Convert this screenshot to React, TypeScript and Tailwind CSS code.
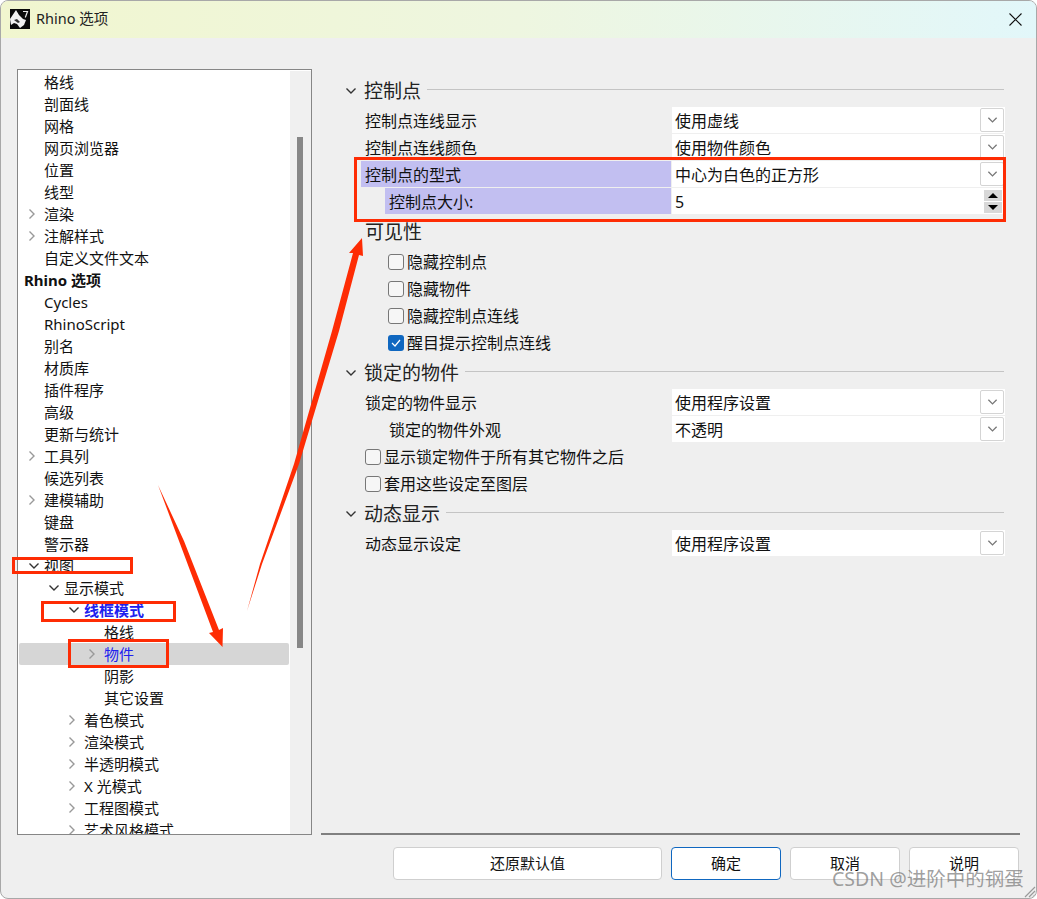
const FONT = "font-['Noto_Sans','Noto_Sans_CJK_SC',sans-serif]";

type TreeItem = {
  text: string;
  indent: number;
  arrow?: "right" | "down";
  bold?: boolean;
  blue?: boolean;
  selected?: boolean;
};

const TREE_ITEMS: TreeItem[] = [
  { text: "格线", indent: 1 },
  { text: "剖面线", indent: 1 },
  { text: "网格", indent: 1 },
  { text: "网页浏览器", indent: 1 },
  { text: "位置", indent: 1 },
  { text: "线型", indent: 1 },
  { text: "渲染", indent: 1, arrow: "right" },
  { text: "注解样式", indent: 1, arrow: "right" },
  { text: "自定义文件文本", indent: 1 },
  { text: "Rhino 选项", indent: 0, bold: true },
  { text: "Cycles", indent: 1 },
  { text: "RhinoScript", indent: 1 },
  { text: "别名", indent: 1 },
  { text: "材质库", indent: 1 },
  { text: "插件程序", indent: 1 },
  { text: "高级", indent: 1 },
  { text: "更新与统计", indent: 1 },
  { text: "工具列", indent: 1, arrow: "right" },
  { text: "候选列表", indent: 1 },
  { text: "建模辅助", indent: 1, arrow: "right" },
  { text: "键盘", indent: 1 },
  { text: "警示器", indent: 1 },
  { text: "视图", indent: 1, arrow: "down" },
  { text: "显示模式", indent: 2, arrow: "down" },
  { text: "线框模式", indent: 3, arrow: "down", bold: true, blue: true },
  { text: "格线", indent: 4 },
  { text: "物件", indent: 4, arrow: "right", blue: true, selected: true },
  { text: "阴影", indent: 4 },
  { text: "其它设置", indent: 4 },
  { text: "着色模式", indent: 3, arrow: "right" },
  { text: "渲染模式", indent: 3, arrow: "right" },
  { text: "半透明模式", indent: 3, arrow: "right" },
  { text: "X 光模式", indent: 3, arrow: "right" },
  { text: "工程图模式", indent: 3, arrow: "right" },
  { text: "艺术风格模式", indent: 3, arrow: "right" },
];

function ChevronRight() {
  return (
    <svg width="8" height="12" viewBox="0 0 8 12" fill="none" stroke="#999" strokeWidth="1.4">
      <path d="M1.5 1.5 6 6l-4.5 4.5" />
    </svg>
  );
}

function ChevronDown({ color = "#333", width = 12 }: { color?: string; width?: number }) {
  return (
    <svg width={width} height="8" viewBox="0 0 12 8" fill="none" stroke={color} strokeWidth="1.4">
      <path d="M1.5 1.5 6 6l4.5-4.5" />
    </svg>
  );
}

function TreeRow({ item }: { item: TreeItem }) {
  const left = [5, 25, 45, 65, 85][item.indent];
  return (
    <div
      className={`flex h-[22px] shrink-0 items-center rounded-[2px] text-[15px] leading-[22px] ${
        item.selected ? "bg-[#d6d6d6]" : ""
      } ${item.bold ? "font-bold" : ""} ${item.blue ? "text-[#2020ee]" : "text-[#111]"}`}
      style={{ paddingLeft: left }}
    >
      {item.arrow && (
        <span className="-ml-[17px] flex w-[17px] justify-start pl-[1px]">
          {item.arrow === "right" ? <ChevronRight /> : <ChevronDown />}
        </span>
      )}
      <span className="whitespace-nowrap">{item.text}</span>
    </div>
  );
}

function Tree() {
  return (
    <div className="flex h-[766px] w-[295px] shrink-0 overflow-hidden border border-[#868686] bg-white">
      <div className="flex w-[272px] flex-col overflow-hidden pl-[1px] pr-[1px] pt-[1px]">
        {TREE_ITEMS.map((item, i) => (
          <TreeRow key={i} item={item} />
        ))}
      </div>
      <div className="mt-[1px] w-[21px] bg-[#f0f0f0] pl-[7px] pt-[66px]">
        <div className="h-[511px] w-[6px] bg-[#878787]" />
      </div>
    </div>
  );
}

function SectionHeader({ title }: { title: string }) {
  return (
    <div className="flex h-[26px] items-center pl-[24px]">
      <span className="flex w-[19px] shrink-0">
        <ChevronDown />
      </span>
      <span className="text-[19px] leading-[26px] text-[#222]">{title}</span>
      <div className="ml-[6px] mr-[16px] h-[1px] flex-1 -translate-y-[2px] bg-[#c4c4c4]" />
    </div>
  );
}

function DropButton() {
  return (
    <div className="ml-auto mr-[1px] flex h-[24px] w-[24px] items-center justify-center rounded-[2px] border border-[#d4d4d4] bg-white">
      <ChevronDown color="#777" width={11} />
    </div>
  );
}

function Spinner() {
  return (
    <div className="ml-auto mr-[3px] flex w-[18px] flex-col gap-[1px]">
      <div className="flex h-[11px] items-center justify-center bg-[#d8d8d8]">
        <div className="h-0 w-0 border-x-[5px] border-b-[5px] border-x-transparent border-b-black" />
      </div>
      <div className="flex h-[11px] items-center justify-center bg-[#d8d8d8]">
        <div className="h-0 w-0 border-x-[5px] border-t-[5px] border-x-transparent border-t-black" />
      </div>
    </div>
  );
}

function FieldRow({
  label,
  value,
  indented,
  highlight,
  spin,
  className = "",
}: {
  label: string;
  value: string;
  indented?: boolean;
  highlight?: boolean;
  spin?: boolean;
  className?: string;
}) {
  return (
    <div className={`flex h-[26px] pl-[40px] text-[16px] leading-[26px] text-[#111] ${className}`}>
      <div className="flex w-[310px] shrink-0">
        <div className={`flex-1 pl-[4px] ${indented ? "ml-[24px]" : ""} ${highlight ? "bg-[#c2bff1]" : ""}`}>
          <span className="inline-block translate-y-[1px]">{label}</span>
        </div>
      </div>
      <div className="ml-[1px] flex w-[333px] items-center bg-white pl-[3px]">
        <span className="translate-y-[1px]">{value}</span>
        {spin ? <Spinner /> : <DropButton />}
      </div>
    </div>
  );
}

function CheckRow({ label, checked, left }: { label: string; checked?: boolean; left: "outer" | "inner" }) {
  return (
    <div
      className={`flex h-[27px] items-center text-[16px] text-[#111] ${left === "inner" ? "pl-[67px]" : "pl-[44px]"}`}
    >
      {checked ? (
        <div className="flex h-[16px] w-[16px] items-center justify-center rounded-[3px] bg-[#0f67c0]">
          <svg width="10" height="8" viewBox="0 0 10 8" fill="none" stroke="white" strokeWidth="1.2">
            <path d="M1 4l3 3 5-6" />
          </svg>
        </div>
      ) : (
        <div className="h-[16px] w-[16px] rounded-[3px] border border-[#777] bg-[#f6f6f6]" />
      )}
      <span className="ml-[3px] whitespace-nowrap">{label}</span>
    </div>
  );
}

function FooterButton({ label, width, primary }: { label: string; width: string; primary?: boolean }) {
  return (
    <button
      className={`h-[33px] rounded-[4px] border bg-white text-[15px] text-[#111] ${width} ${
        primary ? "border-[#0f67c0]" : "border-[#cfcfcf]"
      }`}
    >
      {label}
    </button>
  );
}

function RhinoLogo() {
  return (
    <svg width="20" height="20" viewBox="0 0 20 20" className="shrink-0">
      <rect width="20" height="20" fill="#0a0a0a" />
      <path d="M0 10 6 1l3 5 4 4 3 1-2 5-4 3-3-4-3-1-3 2z" fill="#f2f2f2" />
      <path d="M4 11l3-1 3 3-2 1z" fill="#333" />
      <path d="M13 2.5h4.5l-2.2 6" fill="none" stroke="#e8e8e8" strokeWidth="1.2" />
    </svg>
  );
}

function Annotations() {
  return (
    <>
      <div className="absolute left-[353px] top-[156px] h-[65px] w-[652px] border-[3px] border-[#fe2c04]" />
      <div className="absolute left-[11px] top-[556px] h-[17px] w-[121px] border-[3px] border-[#fe2c04]" />
      <div className="absolute left-[40px] top-[600px] h-[21px] w-[135px] border-[3px] border-[#fe2c04]" />
      <div className="absolute left-[67px] top-[638px] h-[29px] w-[101px] border-[3px] border-[#fe2c04]" />
      <svg className="pointer-events-none absolute left-0 top-0" width="1037" height="899" viewBox="0 0 1037 899">
        <polygon points="157,484 178,540 212,631 208,632 221.5,646 222,627 218,629 183,540" fill="#fe2c04" />
        <polygon
          points="246,610 259,563 293,463 331,330 352,252 348,252 361,237 362,255 358,254 338,330 298,463 261,563"
          fill="#fe2c04"
        />
      </svg>
    </>
  );
}

export default function App() {
  return (
    <div className={`relative flex h-[899px] w-[1037px] flex-col overflow-hidden rounded-[8px] border border-[#a8a8a8] bg-[#efefef] ${FONT}`}>
      <div className="-mx-[1px] -mt-[1px] flex h-[38px] shrink-0 items-center bg-gradient-to-r from-[#f1f6cf] via-[#eef6e0] to-[#e2f7fa] pl-[10px]">
        <RhinoLogo />
        <span className="ml-[6px] text-[14.5px] text-[#222]">Rhino 选项</span>
        <svg width="13" height="13" viewBox="0 0 13 13" className="ml-auto mr-[15px]" stroke="#111" strokeWidth="1.1">
          <path d="M.5.5l12 12M12.5.5l-12 12" />
        </svg>
      </div>
      <div className="flex flex-1 pl-[16px] pt-[31px]">
        <Tree />
        <div className="ml-[9px] flex w-[699px] flex-col">
          <div className="-mt-[31px] h-[797px] border-b-2 border-[#808080] pt-[40px]">
            <SectionHeader title="控制点" />
            <div className="mt-[3px] flex flex-col gap-[1px]">
              <FieldRow label="控制点连线显示" value="使用虚线" />
              <FieldRow label="控制点连线颜色" value="使用物件颜色" />
              <FieldRow label="控制点的型式" value="中心为白色的正方形" highlight />
              <FieldRow label="控制点大小:" value="5" indented highlight spin />
            </div>
            <div className="mt-[5px] h-[26px] pl-[44px] text-[19px] leading-[26px] text-[#222]">可见性</div>
            <div className="mt-[3px]">
              <CheckRow left="inner" label="隐藏控制点" />
              <CheckRow left="inner" label="隐藏物件" />
              <CheckRow left="inner" label="隐藏控制点连线" />
              <CheckRow left="inner" label="醒目提示控制点连线" checked />
            </div>
            <div className="mt-[4px]">
              <SectionHeader title="锁定的物件" />
            </div>
            <div className="mt-[3px]">
              <FieldRow label="锁定的物件显示" value="使用程序设置" />
              <FieldRow className="mt-[1px]" label="锁定的物件外观" value="不透明" indented />
            </div>
            <div className="mt-[1px]">
              <CheckRow left="outer" label="显示锁定物件于所有其它物件之后" />
              <CheckRow left="outer" label="套用这些设定至图层" />
            </div>
            <div className="mt-[4px]">
              <SectionHeader title="动态显示" />
            </div>
            <FieldRow className="mt-[3px]" label="动态显示设定" value="使用程序设置" />
          </div>
          <div className="mt-[12px] flex justify-end gap-[9px] pr-[1px]">
            <FooterButton label="还原默认值" width="w-[269px]" />
            <FooterButton label="确定" width="w-[110px]" primary />
            <FooterButton label="取消" width="w-[110px]" />
            <FooterButton label="说明" width="w-[110px]" />
          </div>
        </div>
      </div>
      <Annotations />
      <span className="absolute left-[831px] top-[863px] whitespace-nowrap text-[19.5px] text-[#777]/70">CSDN @进阶中的钢蛋</span>
      <svg className="absolute bottom-0 right-0" width="14" height="14" viewBox="0 0 14 14" stroke="#9a9a9a" strokeWidth="1.2">
        <path d="M13 3 3 13M13 7l-6 6M13 11l-2 2" />
      </svg>
    </div>
  );
}
